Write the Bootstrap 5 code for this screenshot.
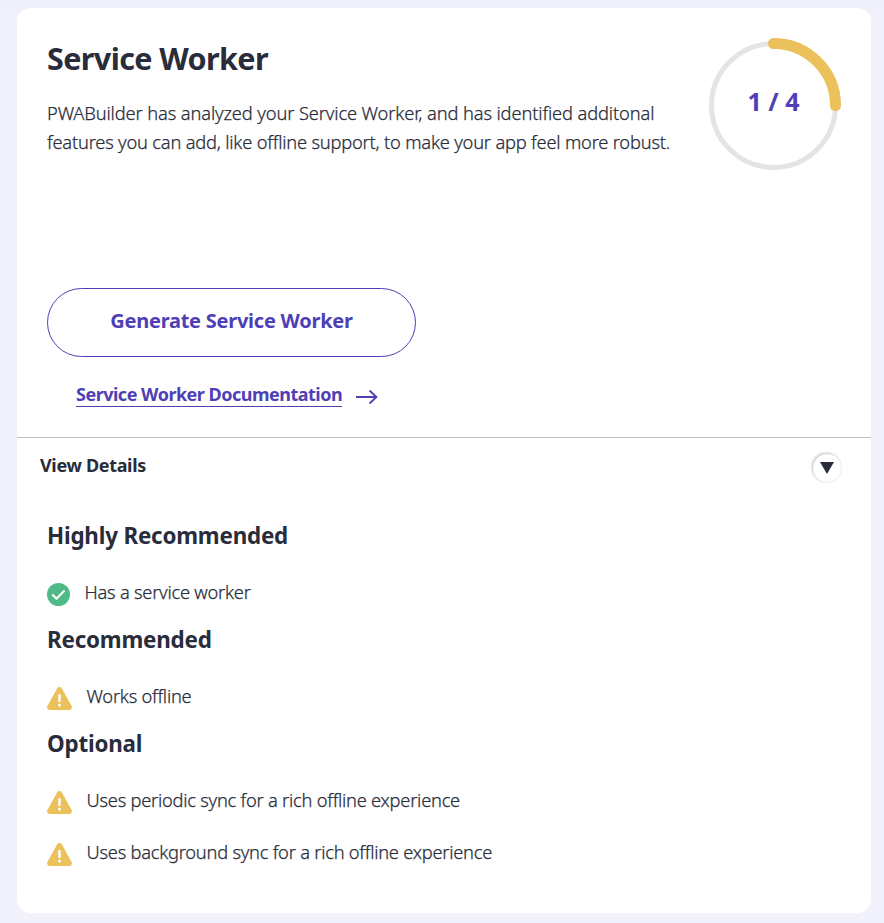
<!DOCTYPE html>
<html lang="en">
<head>
<meta charset="utf-8">
<meta name="viewport" content="width=device-width, initial-scale=1">
<title>Service Worker</title>
<link href="https://cdn.jsdelivr.net/npm/bootstrap@5.3.0/dist/css/bootstrap.min.css" rel="stylesheet">
<style>
  body { min-height: 100vh; background: #f2f2fc linear-gradient(#eeeef8, #f2f2fc 18px) no-repeat; color: #292c3a; font-family: "Noto Sans", "Open Sans", sans-serif; font-size: 18px; overflow: hidden; display: flow-root; }
  .report { width: 854px; height: 905px; margin: 8px 0 0 17px; border-radius: 14px; }
  .summary { height: 429px; padding: 28px 30px 0; }
  .title { font-size: 30.5px; line-height: 44px; font-weight: 700; letter-spacing: -.6px; margin-bottom: 18px; }
  .thin { font-size: 18.3px; font-weight: 300; letter-spacing: -.2px; -webkit-text-stroke: .25px #292c3a; }
  .intro { width: 640px; height: 58px; line-height: 29px; white-space: nowrap; }
  .intro span { letter-spacing: -.12px; }
  .ring { width: 136px; height: 136px; margin: 1px 0 0 auto; }
  .ring text { font-size: 25px; font-weight: 700; fill: #4f3fb6; }
  .generate { width: 369px; height: 69px; margin-top: 115px; padding: 0 0 4px; border: 1px solid #4f3fb6; color: #4f3fb6; font-size: 20px; font-weight: 700; letter-spacing: -.25px; }
  .docs { margin: 24px 0 0 29px; color: #4f3fb6; font-weight: 700; letter-spacing: -.5px; }
  .docs span { height: 26px; line-height: 27px; border-bottom: 1px solid #4f3fb6; }
  .docs svg { margin: 6px 0 0 14px; }
  .toggle { height: 78px; padding: 12px 30px 0 23px; border-top: 1px solid #c2c2c4; font-weight: 700; letter-spacing: -.33px; line-height: 30px; }
  .knob { width: 28px; height: 28px; margin-top: 4px; box-shadow: -1px -1px 3px rgba(0,0,0,.22), 0 0 2px rgba(0,0,0,.12); }
  .group { padding: 4px 30px 0; }
  .group h3 { font-size: 22.4px; font-weight: 700; letter-spacing: -.2px; line-height: 33px; margin-bottom: 14px; }
  .group + .group { padding-top: 5px; }
  .check-item { height: 52px; gap: 14.5px; letter-spacing: -.24px; }
  .check-item svg { margin-top: 4px; }
</style>
</head>
<body>
<svg class="d-none">
  <symbol id="warn" viewBox="0 0 25 23">
    <path d="M10.1 1.4Q12.5-1.2 14.9 1.4L24.6 18.9Q25.8 22.6 22.4 23H2.6Q-.8 22.6.4 18.9Z" fill="#eac15a"/>
    <path d="M12.5 8.2V14" stroke="#fff" stroke-width="2.5" stroke-linecap="round"/><circle cx="12.5" cy="18" r="1.5" fill="#fff"/>
  </symbol>
</svg>
<main class="report bg-white">
  <section class="summary">
    <div class="d-flex">
      <div>
        <h1 class="title">Service Worker</h1>
        <p class="intro thin mb-0"><span>PWABuilder has analyzed your Service Worker, and has identified additonal</span><br>features you can add, like offline support, to make your app feel more robust.</p>
      </div>
      <svg class="ring flex-shrink-0" viewBox="0 0 136 136">
        <circle cx="68.5" cy="68.5" r="62" fill="none" stroke="#e4e4e6" stroke-width="5"/>
        <path d="M68.5 6.5A62 62 0 0 1 130.5 68.5" fill="none" stroke="#eac15a" stroke-width="11" stroke-linecap="round"/>
        <text x="68.5" y="74" text-anchor="middle">1 / 4</text>
      </svg>
    </div>
    <button type="button" class="generate btn rounded-pill d-block">Generate Service Worker</button>
    <a href="#" class="docs d-flex text-decoration-none"><span>Service Worker Documentation</span>
      <svg width="22" height="20" viewBox="0 0 22 20" fill="none" stroke="#4f3fb6" stroke-width="1.8"><path d="M0 10H20.5M13.5 3.5L20.5 10L13.5 16.5"/></svg>
    </a>
  </section>
  <div class="toggle d-flex justify-content-between align-items-start">
    <span>View Details</span>
    <span class="knob rounded-circle bg-white d-flex align-items-center justify-content-center"><svg width="14" height="12" viewBox="0 0 14 12"><path d="M0 0H14L7 12Z" fill="#292c3a"/></svg></span>
  </div>
  <section class="group">
    <h3>Highly Recommended</h3>
    <div class="check-item thin d-flex align-items-center">
      <svg width="23" height="23" viewBox="0 0 23 23"><circle cx="11.5" cy="11.5" r="11.5" fill="#50ba87"/><path d="M5.8 12L9.5 15.7L17 8" fill="none" stroke="#fff" stroke-width="2" stroke-linecap="round" stroke-linejoin="round"/></svg>
      <span>Has a service worker</span>
    </div>
  </section>
  <section class="group">
    <h3>Recommended</h3>
    <div class="check-item thin d-flex align-items-center"><svg width="25" height="23"><use href="#warn"/></svg><span>Works offline</span></div>
  </section>
  <section class="group">
    <h3>Optional</h3>
    <div class="check-item thin d-flex align-items-center"><svg width="25" height="23"><use href="#warn"/></svg><span>Uses periodic sync for a rich offline experience</span></div>
    <div class="check-item thin d-flex align-items-center"><svg width="25" height="23"><use href="#warn"/></svg><span>Uses background sync for a rich offline experience</span></div>
  </section>
</main>
<script src="https://cdn.jsdelivr.net/npm/bootstrap@5.3.0/dist/js/bootstrap.bundle.min.js"></script>
</body>
</html>
